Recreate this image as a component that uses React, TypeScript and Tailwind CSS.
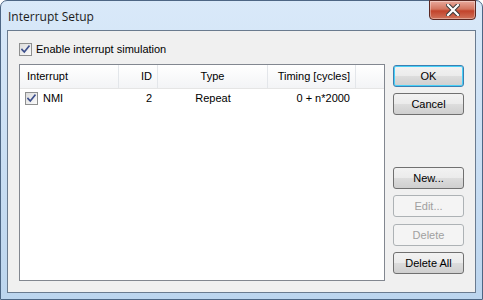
import React from "react";

const font = { fontFamily: "Tahoma, 'Liberation Sans', Arial, sans-serif" };

function Check({ className = "" }: { className?: string }) {
  return (
    <span
      className={`inline-flex w-[13px] h-[13px] shrink-0 items-center justify-center border border-[#8e8f8f] bg-gradient-to-br from-[#dcdcdc] to-[#fbfbfb] ${className}`}
    >
      <svg width="9" height="9" viewBox="0 0 9 9">
        <path
          d="M1 4.5 L3.3 7 L8 1.2"
          fill="none"
          stroke="#3d4f8c"
          strokeWidth="1.7"
          strokeLinecap="square"
        />
      </svg>
    </span>
  );
}

function Btn({
  label,
  primary,
  disabled,
  className = "",
}: {
  label: string;
  primary?: boolean;
  disabled?: boolean;
  className?: string;
}) {
  const border = primary
    ? "border-[#3c7fb1] shadow-[inset_0_0_0_1px_#48d0f8]"
    : disabled
      ? "border-[#adb2b5]"
      : "border-[#707070]";
  const bg = disabled
    ? "bg-[#f4f4f4] text-[#a0a0a0]"
    : "bg-[linear-gradient(#f2f2f2_0%,#ebebeb_50%,#dddddd_50%,#cfcfcf_100%)] text-black";
  return (
    <div
      className={`w-[71px] h-[22px] flex items-center justify-center rounded-[3px] border text-[11px] ${border} ${bg} ${className}`}
    >
      {label}
    </div>
  );
}

export default function App() {
  return (
    <div className="w-[483px] h-[300px] overflow-hidden bg-white" style={font}>
      <div className="h-full flex flex-col rounded-t-[7px] border border-[#4d6684] bg-gradient-to-b from-[#d9e9f9] to-[#bcd5ee] px-[6px] pb-[6px]">
        {/* Title bar */}
        <div className="h-[29px] flex items-start justify-between">
          <span
            className="mt-[7px] ml-[1px] text-[12px] text-[#1b1b1b]"
            style={{ fontFamily: "'Segoe UI', 'Open Sans', 'Noto Sans', sans-serif" }}
          >
            Interrupt Setup
          </span>
          <div className="mt-[-1px] w-[47px] h-[20px] rounded-b-[4px] border border-[#5a2822] bg-[linear-gradient(#e9a99c_0%,#d3755f_45%,#c2432b_55%,#d0735b_100%)] flex items-center justify-center shadow-[inset_0_0_0_1px_rgba(255,255,255,0.35)]">
            <svg width="14" height="12" viewBox="0 0 14 12">
              <path
                d="M2 1 L12 11 M12 1 L2 11"
                stroke="#3b3b3b"
                strokeWidth="4.2"
                strokeLinecap="square"
              />
              <path
                d="M2 1 L12 11 M12 1 L2 11"
                stroke="#ffffff"
                strokeWidth="2.2"
                strokeLinecap="square"
              />
            </svg>
          </div>
        </div>

        {/* Client area */}
        <div className="flex-1 flex border border-[#6a7b8f] bg-[#f0f0f0] text-[11px] text-black">
          <div className="flex flex-col pl-[11px] pt-[12px] pb-[11px] w-[377px]">
            <div className="h-[13px] flex items-center gap-[4px]">
              <Check />
              <span>Enable interrupt simulation</span>
            </div>
            <div className="mt-[8px] flex-1 flex flex-col border border-[#828790] bg-white">
              <div className="h-[24px] flex border-b border-[#e5e5e5] bg-gradient-to-b from-white to-[#f3f4f6]">
                <div className="w-[99px] flex items-center pl-[7px] border-r border-[#e3e6ea]">Interrupt</div>
                <div className="w-[39px] flex items-center justify-end pr-[5px] border-r border-[#e3e6ea]">ID</div>
                <div className="w-[110px] flex items-center justify-center border-r border-[#e3e6ea]">Type</div>
                <div className="w-[88px] flex items-center justify-end pr-[5px] border-r border-[#e3e6ea]">Timing [cycles]</div>
                <div className="flex-1" />
              </div>
              <div className="h-[18px] flex">
                <div className="w-[99px] flex items-center pl-[5px] gap-[5px]">
                  <Check />
                  <span>NMI</span>
                </div>
                <div className="w-[39px] flex items-center justify-end pr-[6px]">2</div>
                <div className="w-[110px] flex items-center justify-center">Repeat</div>
                <div className="w-[88px] flex items-center justify-end pr-[6px]">0 + n*2000</div>
              </div>
            </div>
          </div>
          <div className="flex flex-col pt-[34px] pl-[8px]">
            <Btn label="OK" primary />
            <Btn label="Cancel" className="mt-[6px]" />
            <Btn label="New..." className="mt-[52px]" />
            <Btn label="Edit..." disabled className="mt-[6px]" />
            <Btn label="Delete" disabled className="mt-[7px]" />
            <Btn label="Delete All" className="mt-[6px]" />
          </div>
        </div>
      </div>
    </div>
  );
}
